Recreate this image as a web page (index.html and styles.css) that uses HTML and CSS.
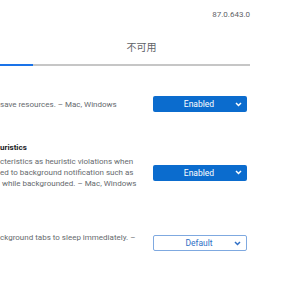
FILE: index.html
```html
<!DOCTYPE html>
<html lang="zh-CN">
<head>
    <meta charset="UTF-8">
    <meta name="viewport" content="width=device-width, initial-scale=1.0">
    <title>Experiments</title>
    <link rel="stylesheet" href="styles.css">
</head>
<body>
    <div class="page">
        <div class="version">87.0.643.0</div>

        <div class="tabs">
            <div class="tab active"></div>
            <div class="tab">不可用</div>
        </div>

        <div class="experiment first">
            <h2 class="name">&nbsp;</h2>
            <div class="flex-row">
                <div class="desc">
                    <p>save resources. – Mac, Windows</p>
                </div>
                <div class="select enabled">
                    <span>Enabled</span>
                    <svg width="7" height="5" viewBox="0 0 7 5"><path d="M1 1l2.5 2.5L6 1" fill="none" stroke="currentColor" stroke-width="1.5"/></svg>
                </div>
            </div>
            <p class="permalink">&nbsp;</p>
        </div>

        <div class="experiment second">
            <h2 class="name">uristics</h2>
            <div class="flex-row">
                <div class="desc">
                    <p>cteristics as heuristic violations when</p>
                    <p>ed to background notification such as</p>
                    <p>&nbsp;while backgrounded. – Mac, Windows</p>
                </div>
                <div class="select enabled">
                    <span>Enabled</span>
                    <svg width="7" height="5" viewBox="0 0 7 5"><path d="M1 1l2.5 2.5L6 1" fill="none" stroke="currentColor" stroke-width="1.5"/></svg>
                </div>
            </div>
            <p class="permalink">&nbsp;</p>
        </div>

        <div class="experiment">
            <h2 class="name">&nbsp;</h2>
            <div class="flex-row">
                <div class="desc">
                    <p>ckground tabs to sleep immediately. –</p>
                    <p>&nbsp;</p>
                </div>
                <div class="select default">
                    <span>Default</span>
                    <svg width="7" height="5" viewBox="0 0 7 5"><path d="M1 1l2.5 2.5L6 1" fill="none" stroke="currentColor" stroke-width="1.5"/></svg>
                </div>
            </div>
        </div>
    </div>
</body>
</html>
```

FILE: styles.css
```css
body {
    margin: 0;
    padding: 0;
    background: #fff;
    font-family: Roboto, "Noto Sans CJK SC", sans-serif;
    color: #5f6368;
    overflow: hidden;
}

.page {
    width: 250px;
}

.version {
    padding-top: 10px;
    font-size: 8px;
    line-height: 10px;
    text-align: right;
    color: #5f6368;
}

.tabs {
    display: grid;
    grid-template-columns: 33px 1fr;
}

.tab {
    padding: 21px 0 9px;
    font-size: 10px;
    line-height: 14px;
    text-align: center;
    color: #5f6368;
    border-bottom: 2px solid #c6c6c6;
}

.tab.active {
    border-bottom-color: #1a73e8;
}

.experiment {
    margin-top: 18px;
}

.experiment.first {
    margin-top: 16px;
}

.experiment.second {
    margin-top: 19px;
}

.name {
    margin: 0 0 2px;
    font-size: 8px;
    line-height: 12px;
    font-weight: bold;
    color: #202124;
}

.flex-row {
    display: flex;
    align-items: center;
}

.desc {
    width: 153px;
    font-size: 8px;
    line-height: 11px;
    white-space: nowrap;
    color: #666a6e;
}

.desc p,
.permalink {
    margin: 0;
}

.permalink {
    font-size: 8px;
    line-height: 11px;
}

.select {
    box-sizing: border-box;
    display: flex;
    align-items: center;
    width: 94px;
    height: 16px;
    padding: 0 5px 0 10px;
    border-radius: 2px;
    font-size: 8.5px;
}

.select span {
    flex: 1;
    text-align: center;
}

.select.enabled {
    background: #0b6cce;
    color: #fff;
}

.select.default {
    background: #fff;
    border: 1px solid #7fa9e0;
    color: #2f6fc6;
}
```
